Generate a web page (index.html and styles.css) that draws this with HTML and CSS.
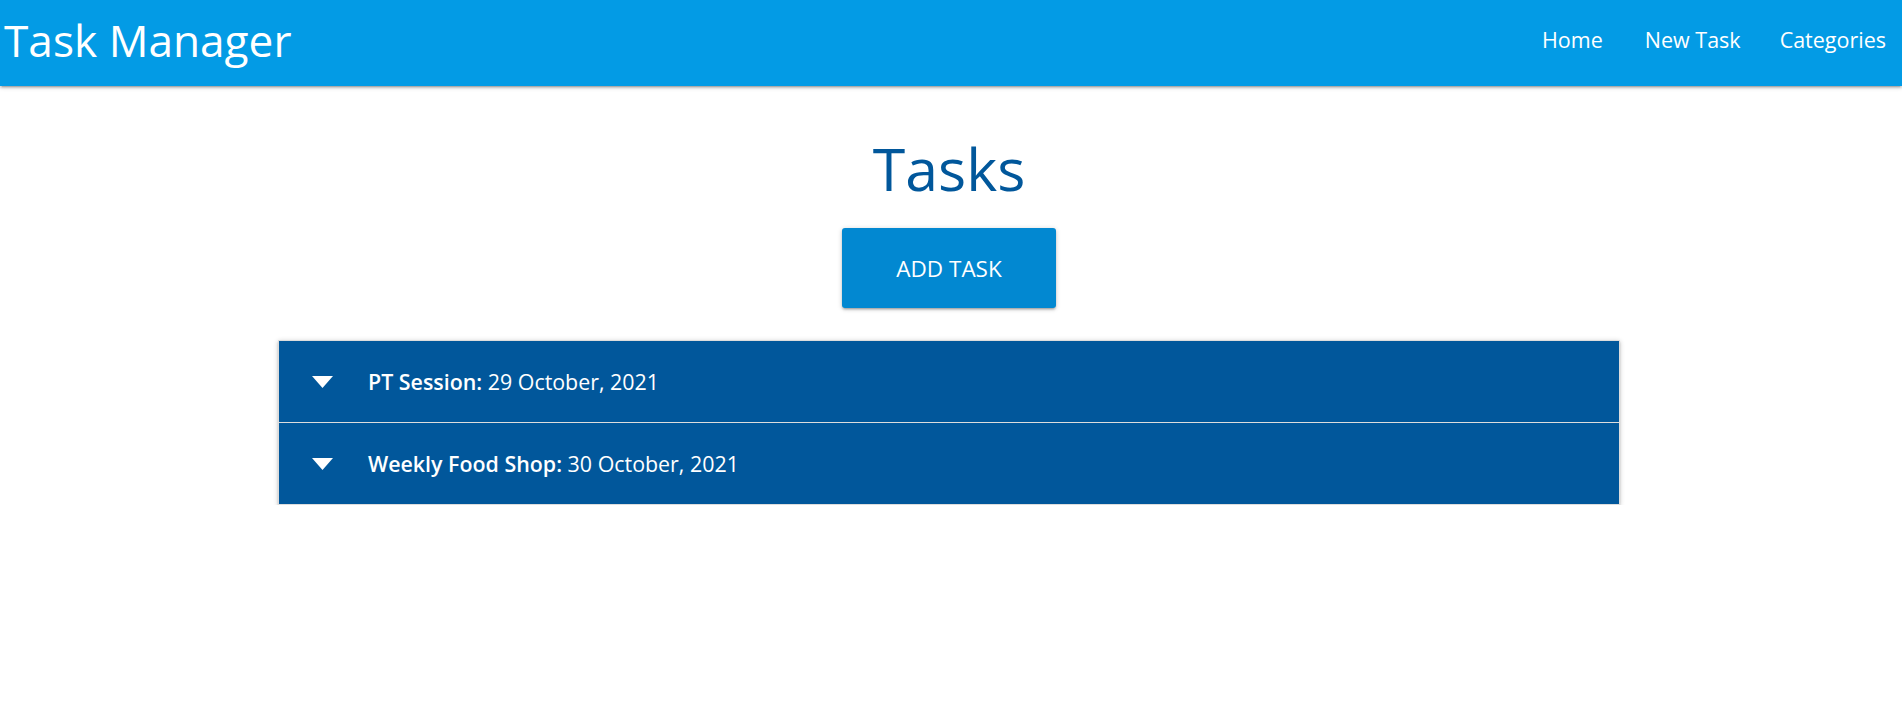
FILE: index.html
```html
<!DOCTYPE html>
<html lang="en">
<head>
<meta charset="utf-8">
<title>Task Manager</title>
<link rel="stylesheet" href="styles.css">
</head>
<body>
<nav class="navbar">
  <a class="brand" href="#">Task Manager</a>
  <ul class="nav-links">
    <li><a href="#">Home</a></li>
    <li><a href="#">New Task</a></li>
    <li><a href="#">Categories</a></li>
  </ul>
</nav>
<main class="page">
  <h1 class="title">Tasks</h1>
  <div class="actions">
    <a class="btn" href="#">Add Task</a>
  </div>
  <ul class="collapsible">
    <li class="item">
      <div class="item-header">
        <svg class="caret" width="21" height="12" viewBox="0 0 21 12"><polygon points="0,0 21,0 10.5,12" fill="#fff"/></svg>
        <span class="item-text"><strong>PT Session:</strong> 29 October, 2021</span>
      </div>
    </li>
    <li class="item">
      <div class="item-header">
        <svg class="caret" width="21" height="12" viewBox="0 0 21 12"><polygon points="0,0 21,0 10.5,12" fill="#fff"/></svg>
        <span class="item-text"><strong>Weekly Food Shop:</strong> 30 October, 2021</span>
      </div>
    </li>
  </ul>
</main>
</body>
</html>
```
FILE: styles.css
```css
* { box-sizing: border-box; }
html, body { margin: 0; padding: 0; }
body {
  font-family: "Open Sans", "Noto Sans", sans-serif;
  background: #fff;
  color: #333;
}
a { text-decoration: none; color: inherit; }
ul { list-style: none; margin: 0; padding: 0; }

.navbar {
  height: 86px;
  background: #039be5;
  display: flex;
  align-items: center;
  justify-content: space-between;
  padding: 0 0 0 4px;
  box-shadow: 0 2px 2px 0 rgba(0,0,0,0.14), 0 3px 1px -2px rgba(0,0,0,0.12), 0 1px 5px 0 rgba(0,0,0,0.2);
  position: relative;
  z-index: 2;
}
.brand {
  color: #fff;
  font-size: 44.2px;
  line-height: 1;
  margin-top: -6px;
}
.nav-links {
  display: flex;
  margin-top: -6px;
}
.nav-links a {
  display: block;
  color: #fff;
  font-size: 21.5px;
  padding: 0 17px 0 22px;
  line-height: 1;
}
.nav-links li:first-child a { padding-right: 20px; }
.nav-links li:last-child a { padding-right: 16px; }

.page {
  display: flex;
  flex-direction: column;
  align-items: center;
  padding-right: 4px;
}
.title {
  margin: 47px 0 0;
  font-size: 59px;
  line-height: 70px;
  font-weight: 400;
  color: #01579b;
}
.actions { margin-top: 25px; }
.btn {
  display: flex;
  align-items: center;
  justify-content: center;
  width: 214px;
  height: 80px;
  background: #0288d1;
  color: #fff;
  border-radius: 3px;
  font-size: 22.5px;
  text-transform: uppercase;
  box-shadow: 0 2px 2px 0 rgba(0,0,0,0.14), 0 3px 1px -2px rgba(0,0,0,0.12), 0 1px 5px 0 rgba(0,0,0,0.2);
}
.collapsible {
  margin-top: 32px;
  width: 1342px;
  border: 1px solid #ddd;
  border-bottom: 0;
  box-shadow: 0 2px 2px 0 rgba(0,0,0,0.14), 0 3px 1px -2px rgba(0,0,0,0.12), 0 1px 5px 0 rgba(0,0,0,0.2);
}
.item-header {
  height: 82px;
  background: #01579b;
  border-bottom: 1px solid #ddd;
  display: flex;
  align-items: center;
  padding-left: 33px;
  color: #fff;
}
.caret { flex: none; }
.item-text {
  margin-left: 35px;
  font-size: 21.4px;
}
.item-text strong { font-weight: 600; }
```
